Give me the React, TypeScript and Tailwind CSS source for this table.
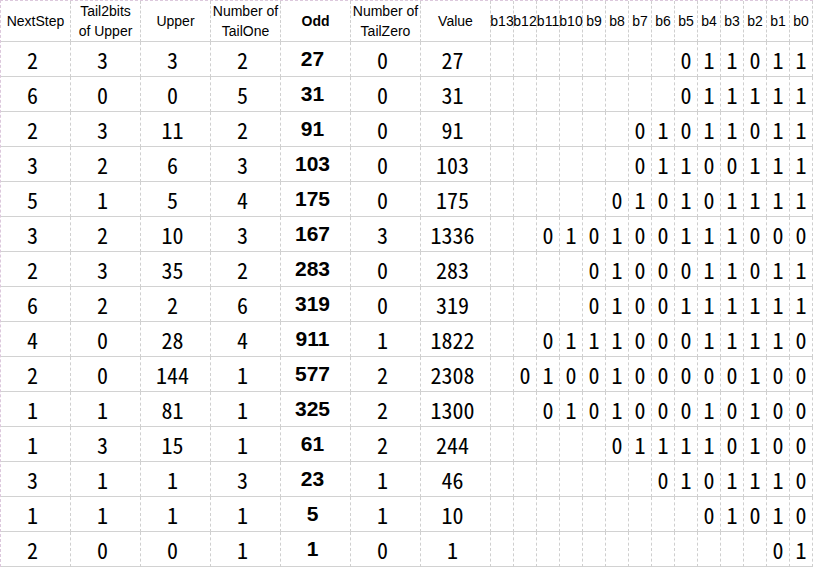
import React from 'react';

type Row = [number, number, number, number, number, number, number];

const rows: Row[] = [
  [2, 3, 3, 2, 27, 0, 27],
  [6, 0, 0, 5, 31, 0, 31],
  [2, 3, 11, 2, 91, 0, 91],
  [3, 2, 6, 3, 103, 0, 103],
  [5, 1, 5, 4, 175, 0, 175],
  [3, 2, 10, 3, 167, 3, 1336],
  [2, 3, 35, 2, 283, 0, 283],
  [6, 2, 2, 6, 319, 0, 319],
  [4, 0, 28, 4, 911, 1, 1822],
  [2, 0, 144, 1, 577, 2, 2308],
  [1, 1, 81, 1, 325, 2, 1300],
  [1, 3, 15, 1, 61, 2, 244],
  [3, 1, 1, 3, 23, 1, 46],
  [1, 1, 1, 1, 5, 1, 10],
  [2, 0, 0, 1, 1, 0, 1],
];

const headers = ['NextStep', 'Tail2bits\nof Upper', 'Upper', 'Number of\nTailOne', 'Odd', 'Number of\nTailZero', 'Value'];
const bitHeaders = Array.from({ length: 14 }, (_, i) => `b${13 - i}`);

const narrow = "font-['Liberation_Sans_Narrow','Arial_Narrow','Liberation_Sans',sans-serif]";
const digits = "font-['Noto_Sans_Mono_CJK_JP','DejaVu_Sans_Condensed',monospace]";

const cell = 'flex items-center justify-center border-r border-b border-r-[#cfcfcf] border-b-[#d2d2d2] border-dashed [border-bottom-style:solid]';

export default function App() {
  return (
    <div className="w-[813px] h-[567px] bg-white overflow-hidden">
      <div className="grid grid-cols-[repeat(7,70px)_repeat(14,23px)] grid-rows-[41px_repeat(15,35px)] border-l border-t border-dashed border-l-[#dcc8dc] border-t-[#dcc8dc] text-black">
        {headers.map((h, i) => (
          <div
            key={h}
            className={`${cell} ${narrow} text-[14px] leading-5 text-center whitespace-pre-line ${i === 4 ? 'font-bold' : ''}`}
          >
            {h}
          </div>
        ))}
        {bitHeaders.map((h) => (
          <div key={h} className={`${cell} ${narrow} text-[14px]`}>
            {h}
          </div>
        ))}
        {rows.map((r, ri) => {
          const bits = '0' + r[6].toString(2);
          const pad = 14 - bits.length;
          return (
            <React.Fragment key={ri}>
              {r.map((v, ci) => (
                <div
                  key={ci}
                  className={
                    ci === 4
                      ? `${cell} pr-[6px] font-['Liberation_Sans',sans-serif] font-bold text-[21px]`
                      : `${cell} pr-[6px] ${digits} text-[22px]`
                  }
                >
                  {v}
                </div>
              ))}
              {Array.from({ length: 14 }, (_, bi) => (
                <div key={`b${bi}`} className={`${cell} ${digits} text-[22px]`}>
                  {bi >= pad ? bits[bi - pad] : ''}
                </div>
              ))}
            </React.Fragment>
          );
        })}
      </div>
    </div>
  );
}
